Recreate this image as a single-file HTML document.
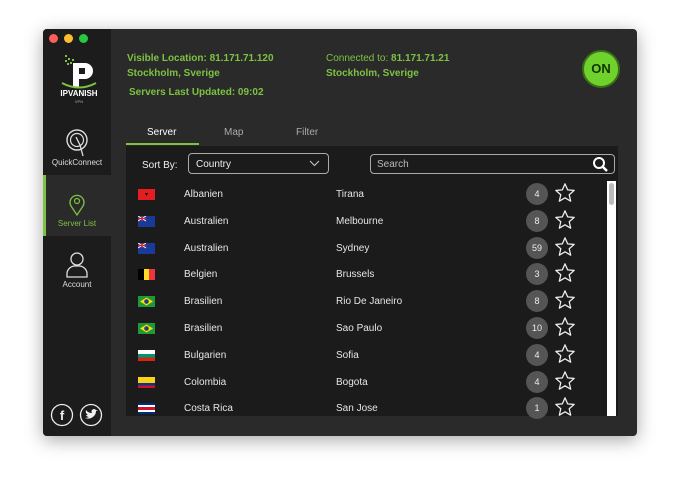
<!DOCTYPE html>
<html><head><style>
*{margin:0;padding:0;box-sizing:border-box}
body{width:680px;height:493px;background:#fff;font-family:"Liberation Sans",sans-serif;position:relative;overflow:hidden}
.win{position:absolute;left:43px;top:29px;width:594px;height:407px;background:#2a2a2a;border-radius:4px;box-shadow:0 4px 18px rgba(0,0,0,.35);overflow:hidden}
.side{position:absolute;left:0;top:0;width:68px;height:407px;background:#1c1c1c}
.dot{position:absolute;top:5px;width:9px;height:9px;border-radius:50%}
.g{color:#7dc242;font-weight:bold;font-size:10px;position:absolute}
.t{position:absolute;font-size:10px;color:#ddd}
.panel{position:absolute;left:83px;top:117px;width:492px;height:270px;background:#1b1b1b}
.row{position:absolute;left:0;height:27px;width:480px;font-size:10px;color:#e6e6e6}
.row span{position:absolute;top:8px}
.flag{position:absolute;left:12px;top:8px;width:17px;height:11px}
.cnt{position:absolute;left:400px;top:2px;width:22px;height:22px;border-radius:50%;background:#555;color:#eee;font-size:9px;text-align:center;line-height:22px}
.star{position:absolute;left:428px;top:1px}
.sl{position:absolute;font-size:8px;text-align:center;width:68px}
</style></head><body>
<div class="win">
<div class="side">
 <div class="dot" style="left:6px;background:#fc5f57"></div>
 <div class="dot" style="left:21px;background:#fdbc2e"></div>
 <div class="dot" style="left:36px;background:#28c840"></div>
 <svg style="position:absolute;left:14px;top:22px" width="44" height="55" viewBox="0 0 44 55">
  <g fill="#7dc242"><rect x="8" y="4" width="2" height="2"/><rect x="11" y="7" width="2" height="2"/><rect x="8" y="9" width="2" height="2"/><rect x="13" y="11" width="2" height="2"/><rect x="10" y="12" width="2" height="2"/><rect x="15" y="8" width="2" height="2"/></g>
  <path d="M16 12h12a8 8 0 0 1 0 16h-6v9h-6z" fill="#fff"/><rect x="22" y="17" width="6" height="6" fill="#1c1c1c"/>
  <path d="M5 32 q17 9 34 0" stroke="#7dc242" stroke-width="2" fill="none"/>
  <text x="22" y="45" font-size="8" font-weight="bold" fill="#fff" text-anchor="middle" font-family="Liberation Sans">IPVANISH</text>
  <text x="22" y="52" font-size="4" fill="#aaa" text-anchor="middle" font-family="Liberation Sans">VPN</text>
 </svg>
 <svg style="position:absolute;left:22px;top:99px" width="24" height="30" viewBox="0 0 24 30"><circle cx="12" cy="12" r="10" fill="none" stroke="#ddd" stroke-width="1.4"/><circle cx="12" cy="12" r="6.5" fill="none" stroke="#ddd" stroke-width="1.2"/><path d="M11 9 L15 17 L18 28" stroke="#ddd" stroke-width="1.3" fill="none"/></svg>
 <div class="sl" style="top:129px;color:#ddd">QuickConnect</div>
 <div style="position:absolute;left:0;top:146px;width:68px;height:61px;background:#2a2a2a;border-left:3px solid #7dc242"></div>
 <svg style="position:absolute;left:25px;top:164px" width="18" height="24" viewBox="0 0 18 24"><path d="M9 22 L3 13 A7 7 0 1 1 15 13 Z" fill="none" stroke="#7dc242" stroke-width="1.3"/><circle cx="9" cy="8" r="2.5" fill="none" stroke="#7dc242" stroke-width="1.2"/></svg>
 <div class="sl" style="top:190px;color:#7dc242">Server List</div>
 <svg style="position:absolute;left:22px;top:222px" width="24" height="28" viewBox="0 0 24 28"><circle cx="12" cy="8" r="6" fill="none" stroke="#ddd" stroke-width="1.3"/><path d="M2 26 v-4 a8 8 0 0 1 8-7 h4 a8 8 0 0 1 8 7 v4 z" fill="none" stroke="#ddd" stroke-width="1.3"/></svg>
 <div class="sl" style="top:251px;color:#ddd">Account</div>
 <svg style="position:absolute;left:7px;top:374px" width="56" height="24" viewBox="0 0 56 24"><circle cx="12" cy="12" r="10.5" fill="none" stroke="#eee" stroke-width="1.3"/><text x="12" y="17" font-size="13" font-weight="bold" fill="#eee" text-anchor="middle" font-family="Liberation Sans">f</text><circle cx="41" cy="12" r="10.5" fill="none" stroke="#eee" stroke-width="1.3"/><path d="M35 15 q5 2 9-2 q2-2 2-5 l2-1 -2 0 q-2-2-4 0 q-1 1 0 3 q-4 0-6-3 q-1 3 2 5 l-2 0 q1 2 3 2 q-2 1-4 1z" fill="#eee"/></svg>
</div>
<div class="g" style="left:84px;top:24px">Visible Location: 81.171.71.120</div>
<div class="g" style="left:84px;top:39px">Stockholm, Sverige</div>
<div class="g" style="left:86px;top:58px">Servers Last Updated: 09:02</div>
<div class="g" style="left:283px;top:24px"><span style="font-weight:normal">Connected to:</span> 81.171.71.21</div>
<div class="g" style="left:283px;top:39px">Stockholm, Sverige</div>
<div style="position:absolute;left:539px;top:21px;width:38px;height:38px;border-radius:50%;background:#6fd12b;border:2px solid #3c6e1a;color:#143200;font-weight:bold;font-size:13px;text-align:center;line-height:34px">ON</div>
<div class="t" style="left:104px;top:98px;color:#fff">Server</div>
<div class="t" style="left:181px;top:98px;color:#aaa">Map</div>
<div class="t" style="left:253px;top:98px;color:#aaa">Filter</div>
<div style="position:absolute;left:83px;top:114px;width:73px;height:2px;background:#7dc242"></div>
<div class="panel">
 <div class="t" style="left:16px;top:14px;color:#eee">Sort By:</div>
 <div style="position:absolute;left:62px;top:7px;width:141px;height:21px;border:1px solid #aaa;border-radius:4px;font-size:10px;color:#eee;padding:5px 7px">Country<svg style="position:absolute;right:8px;top:6px" width="11" height="7"><path d="M1 1l4.5 4.5L10 1" stroke="#ccc" fill="none"/></svg></div>
 <div style="position:absolute;left:244px;top:8px;width:245px;height:20px;border:1px solid #aaa;border-radius:4px;font-size:10px;color:#bbb;padding:4px 6px">Search<svg style="position:absolute;right:5px;top:1px" width="17" height="17"><circle cx="7" cy="7" r="5" stroke="#fff" stroke-width="2" fill="none"/><path d="M11 11l4 4" stroke="#fff" stroke-width="2.5"/></svg></div>
 <div style="position:absolute;left:481px;top:35px;width:9px;height:235px;background:#fff"><div style="margin:2px auto;width:5px;height:22px;border-radius:3px;background:#bbb"></div></div>
 <div id="rows"></div>
</div>
</div>
<script>
var d=[["Albanien","Tirana",4,'<rect width="17" height="11" fill="#e41e20"/><path d="M7 4h3l-1.5 3z" fill="#000"/>'],
["Australien","Melbourne",8,'<rect width="17" height="11" fill="#1a3a9a"/><path d="M0 0l8 5M8 0L0 5" stroke="#fff"/><path d="M4 0v5M0 2.5h8" stroke="#d22" stroke-width="1.2"/>'],
["Australien","Sydney",59,'<rect width="17" height="11" fill="#1a3a9a"/><path d="M0 0l8 5M8 0L0 5" stroke="#fff"/><path d="M4 0v5M0 2.5h8" stroke="#d22" stroke-width="1.2"/>'],
["Belgien","Brussels",3,'<rect width="6" height="11" fill="#000"/><rect x="6" width="5" height="11" fill="#fdda24"/><rect x="11" width="6" height="11" fill="#ef3340"/>'],
["Brasilien","Rio De Janeiro",8,'<rect width="17" height="11" fill="#1c9a3a"/><path d="M8.5 1.5L15 5.5 8.5 9.5 2 5.5z" fill="#fedf00"/><circle cx="8.5" cy="5.5" r="2.3" fill="#243a8a"/>'],
["Brasilien","Sao Paulo",10,'<rect width="17" height="11" fill="#1c9a3a"/><path d="M8.5 1.5L15 5.5 8.5 9.5 2 5.5z" fill="#fedf00"/><circle cx="8.5" cy="5.5" r="2.3" fill="#243a8a"/>'],
["Bulgarien","Sofia",4,'<rect width="17" height="4" fill="#fff"/><rect y="4" width="17" height="3.5" fill="#00966e"/><rect y="7.5" width="17" height="3.5" fill="#d62612"/>'],
["Colombia","Bogota",4,'<rect width="17" height="6" fill="#fcd116"/><rect y="6" width="17" height="2.5" fill="#003893"/><rect y="8.5" width="17" height="2.5" fill="#ce1126"/>'],
["Costa Rica","San Jose",1,'<rect width="17" height="11" fill="#fff"/><rect y="0" width="17" height="2" fill="#002b7f"/><rect y="9" width="17" height="2" fill="#002b7f"/><rect y="4" width="17" height="3" fill="#ce1126"/>']];
var h='';d.forEach(function(r,i){var y=35+i*26.8;h+='<div class="row" style="top:'+y+'px"><svg class="flag" viewBox="0 0 17 11">'+r[3]+'</svg><span style="left:58px">'+r[0]+'</span><span style="left:210px">'+r[1]+'</span><div class="cnt">'+r[2]+'</div><svg class="star" width="22" height="22" viewBox="0 0 24 24"><path d="M12 2l2.9 6.6 7.1.6-5.4 4.7 1.6 7-6.2-3.7-6.2 3.7 1.6-7L2 9.2l7.1-.6z" fill="none" stroke="#eee" stroke-width="1.4" stroke-linejoin="round"/></svg></div>'});
document.getElementById('rows').innerHTML=h;
</script>
</body></html>
